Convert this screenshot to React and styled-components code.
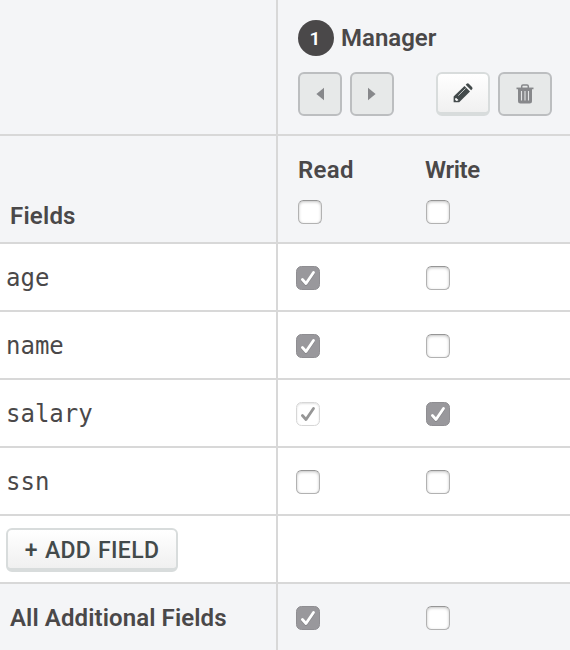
import React from "react";
import styled, { createGlobalStyle, css } from "styled-components";

const GlobalStyle = createGlobalStyle`
  *, *::before, *::after { box-sizing: border-box; }
  body { margin: 0; background: #fff; overflow: hidden; }
`;

const Table = styled.div`
  width: 570px;
  height: 650px;
  overflow: hidden;
  color: #4a4849;
  font-family: Roboto, "Liberation Sans", sans-serif;
`;

const Row = styled.div`
  display: grid;
  grid-template-columns: 278px 1fr;
  height: ${(p) => p.$height || 68}px;
  background: ${(p) => (p.$shaded ? "#f4f5f7" : "#fff")};
  border-bottom: 2px solid #d8d8d8;
`;

const NameCell = styled.div`
  display: flex;
  align-items: ${(p) => (p.$bottom ? "flex-end" : "center")};
  padding: ${(p) => (p.$bottom ? 0 : 2)}px 6px ${(p) => (p.$bottom ? 12 : 0)}px;
  border-right: 2px solid #d8d8d8;
`;

const Label = styled.span`
  font-size: 24px;
  line-height: 28px;
  font-weight: 600;
  white-space: nowrap;
  letter-spacing: ${(p) => p.$tracking || 0}px;
  margin-left: ${(p) => p.$indent || 0}px;
`;

const FieldName = styled.span`
  font-family: "DejaVu Sans Mono", monospace;
  font-size: 24px;
  line-height: 28px;
`;

const RoleCell = styled.div`
  display: flex;
  flex-direction: column;
  padding: 20px 18px 0 20px;
`;

const RoleTitle = styled.div`
  display: flex;
  align-items: center;
  gap: 7px;
  height: 36px;
`;

const Badge = styled.span`
  width: 36px;
  height: 36px;
  border-radius: 50%;
  background: #4a4849;
  color: #fff;
  font: 600 19px/38px Roboto, sans-serif;
  text-align: center;
  padding-right: 2px;
`;

const Toolbar = styled.div`
  display: flex;
  justify-content: space-between;
  margin-top: 16px;
`;

const ButtonGroup = styled.div`
  display: flex;
  gap: 8px;
`;

const raised = css`
  border: 2px solid #d8dcdc;
  border-bottom-width: 4px;
  background: linear-gradient(#fff, #f0f0f0);
  color: #434a4b;
`;

const muted = css`
  border: 2px solid #bcbec0;
  background: #e7e9e9;
  color: #87888b;
`;

const Button = styled.button`
  display: flex;
  align-items: center;
  justify-content: center;
  width: ${(p) => p.$width}px;
  height: 44px;
  padding: 0;
  border-radius: 6px;
  ${(p) => (p.$raised ? raised : muted)}
  svg { display: block; }
`;

const AddButton = styled(Button)`
  padding-top: 3px;
  font: 550 23px/26px Roboto, "Liberation Sans", sans-serif;
  letter-spacing: 0.3px;
  word-spacing: 1px;
  white-space: nowrap;
`;

const Permissions = styled.div`
  display: grid;
  grid-template-columns: 130px 1fr;
  align-items: center;
  padding: 2px 0 0 18px;
`;

const HeadPermissions = styled.div`
  display: grid;
  grid-template-columns: 128px 1fr;
  grid-template-rows: 28px 24px;
  row-gap: 16px;
  padding: 20px 0 0 20px;
`;

const HeadLabel = styled(Label)`
  margin-left: ${(p) => p.$shift || 0}px;
`;

const boxStyles = {
  off: css`
    border: 1px solid #b2b2b2;
    border-top-color: #969696;
    background: #fff;
    box-shadow: inset 0 1px 3px rgba(0, 0, 0, 0.24);
  `,
  on: css`
    border: 1px solid #8f8e92;
    background: #99989c;
    color: #fff;
  `,
  implied: css`
    border: 1px solid #d7d7d7;
    background: #fff;
    box-shadow: inset 0 1px 2px rgba(0, 0, 0, 0.12);
    color: #969696;
  `,
};

const Box = styled.span`
  display: block;
  width: 24px;
  height: 24px;
  border-radius: 5.5px;
  ${(p) => boxStyles[p.$state]}
  svg { display: block; overflow: visible; }
`;

function Checkbox({ state = "off" }) {
  return (
    <Box $state={state} role="checkbox" aria-checked={state !== "off"}>
      {state !== "off" && (
        <svg width="22" height="22" viewBox="0 0 22 22" fill="none" strokeWidth="2.8" strokeLinecap="round" strokeLinejoin="round">
          {state === "on" && <path d="M5.4 13.5 9 17.5 16.5 6.5" stroke="#77767a" strokeOpacity=".6" />}
          <path d="M5.4 12.5 9 16.5 16.5 5.5" stroke="currentColor" />
        </svg>
      )}
    </Box>
  );
}

const ArrowIcon = ({ right }) => (
  <svg width="8" height="14" viewBox="0 0 8 14" fill="currentColor">
    <path d={right ? "M0 .7V13.3L7.6 7Z" : "M8 .7V13.3L.4 7Z"} />
  </svg>
);

const PencilIcon = () => (
  <svg width="20" height="20" viewBox="0 0 20 20" fill="currentColor">
    <path d="M.6 19.2V13.6L11.5 2.9 17 8.4 6.2 19.2Z" />
    <path d="m12.7 1.7 1-.9q1.1-.9 2.3.1l3 3q1 1.2.1 2.3l-1 1Z" />
    <path d="m5.3 12.6 7.2-7.1" stroke="#c4c7c7" strokeWidth="1" fill="none" />
    <path d="m2.5 14.9-.5 1.8 1.3 1.3 2-.5-.3-1.2-1.2-.2-.1-1.2Z" fill="#fafafa" />
  </svg>
);

const TrashIcon = () => (
  <svg width="18" height="20" viewBox="0 0 18 20" fill="none" stroke="currentColor">
    <path d="M5.7 4V2.3Q5.7 1 7 1h4q1.3 0 1.3 1.3V4" strokeWidth="1.5" />
    <path d="M.5 4.4h17" strokeWidth="1.7" />
    <path d="M2 4.5h14V17q0 2.5-2.5 2.5h-9Q2 19.5 2 17Z" fill="currentColor" stroke="none" />
    <path d="M5.5 7v9.5M9 7v9.5M12.5 7v9.5" stroke="#e4e5e6" strokeWidth="1.1" />
  </svg>
);

const fields = [
  { name: "age", read: "on", write: "off" },
  { name: "name", read: "on", write: "off" },
  { name: "salary", read: "implied", write: "on" },
  { name: "ssn", read: "off", write: "off" },
];

export default function App() {
  return (
    <>
      <GlobalStyle />
      <Table>
        <Row $height={136} $shaded>
          <NameCell />
          <RoleCell>
            <RoleTitle>
              <Badge>1</Badge>
              <Label>Manager</Label>
            </RoleTitle>
            <Toolbar>
              <ButtonGroup>
                <Button $width={44} aria-label="Move left"><ArrowIcon /></Button>
                <Button $width={44} aria-label="Move right"><ArrowIcon right /></Button>
              </ButtonGroup>
              <ButtonGroup>
                <Button $width={54} $raised aria-label="Edit"><PencilIcon /></Button>
                <Button $width={54} aria-label="Delete"><TrashIcon /></Button>
              </ButtonGroup>
            </Toolbar>
          </RoleCell>
        </Row>
        <Row $height={108} $shaded>
          <NameCell $bottom><Label $indent={4} $tracking={0.2}>Fields</Label></NameCell>
          <HeadPermissions>
            <HeadLabel $tracking={0.3}>Read</HeadLabel>
            <HeadLabel $shift={-1} $tracking={-0.4}>Write</HeadLabel>
            <Checkbox />
            <Checkbox />
          </HeadPermissions>
        </Row>
        {fields.map((f) => (
          <Row key={f.name}>
            <NameCell><FieldName>{f.name}</FieldName></NameCell>
            <Permissions>
              <Checkbox state={f.read} />
              <Checkbox state={f.write} />
            </Permissions>
          </Row>
        ))}
        <Row>
          <NameCell><AddButton $width={172} $raised>+ ADD FIELD</AddButton></NameCell>
        </Row>
        <Row $shaded>
          <NameCell><Label $indent={4} $tracking={0.1}>All Additional Fields</Label></NameCell>
          <Permissions>
            <Checkbox state="on" />
            <Checkbox />
          </Permissions>
        </Row>
      </Table>
    </>
  );
}
